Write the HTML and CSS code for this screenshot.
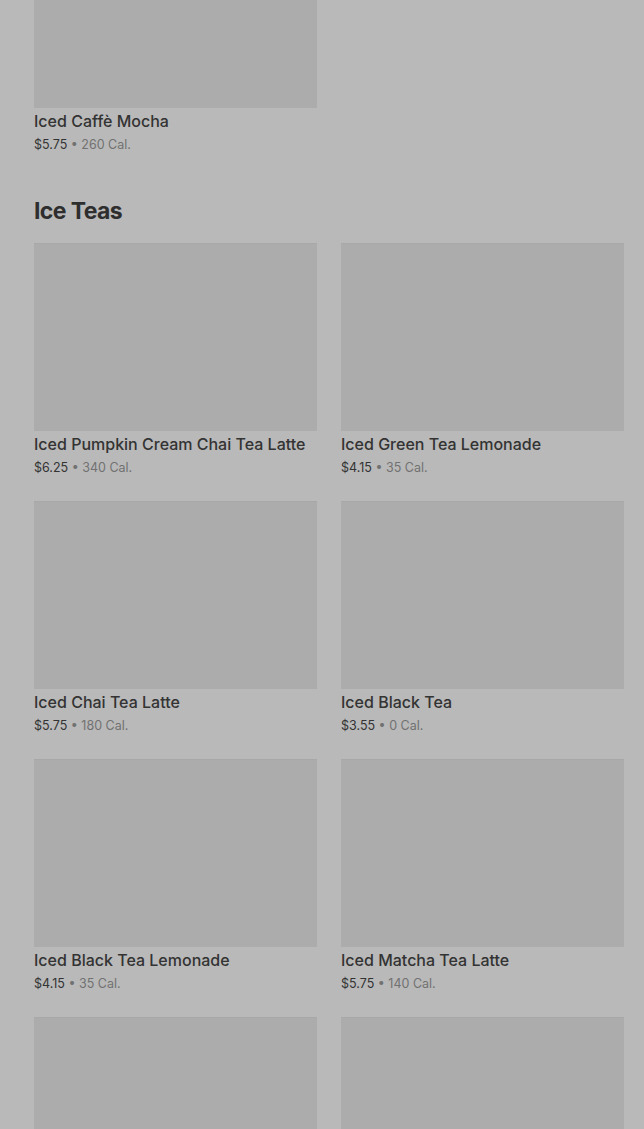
FILE: index.html
```html
<!DOCTYPE html>
<html>
<head>
<meta charset="utf-8">
<meta name="viewport" content="width=device-width, initial-scale=1.0">
<title>Menu</title>
<link rel="stylesheet" href="styles.css">
</head>
<body>
<div class="menu">
    <section class="section">
        <div class="grid">
            <div class="item">
                <div class="thumb"></div>
                <div class="item-name">Iced Caffè Mocha</div>
                <div class="item-meta"><span class="price">$5.75</span> • 260 Cal.</div>
            </div>
        </div>
    </section>

    <section class="section">
        <h2 class="section-title">Ice Teas</h2>
        <div class="grid">
            <div class="item">
                <div class="thumb"></div>
                <div class="item-name">Iced Pumpkin Cream Chai Tea Latte</div>
                <div class="item-meta"><span class="price">$6.25</span> • 340 Cal.</div>
            </div>
            <div class="item">
                <div class="thumb"></div>
                <div class="item-name">Iced Green Tea Lemonade</div>
                <div class="item-meta"><span class="price">$4.15</span> • 35 Cal.</div>
            </div>
            <div class="item">
                <div class="thumb"></div>
                <div class="item-name">Iced Chai Tea Latte</div>
                <div class="item-meta"><span class="price">$5.75</span> • 180 Cal.</div>
            </div>
            <div class="item">
                <div class="thumb"></div>
                <div class="item-name">Iced Black Tea</div>
                <div class="item-meta"><span class="price">$3.55</span> • 0 Cal.</div>
            </div>
            <div class="item">
                <div class="thumb"></div>
                <div class="item-name">Iced Black Tea Lemonade</div>
                <div class="item-meta"><span class="price">$4.15</span> • 35 Cal.</div>
            </div>
            <div class="item">
                <div class="thumb"></div>
                <div class="item-name">Iced Matcha Tea Latte</div>
                <div class="item-meta"><span class="price">$5.75</span> • 140 Cal.</div>
            </div>
            <div class="item">
                <div class="thumb"></div>
            </div>
            <div class="item">
                <div class="thumb"></div>
            </div>
        </div>
    </section>
</div>
</body>
</html>
```
FILE: styles.css
```css
body {
    margin: 0;
    padding: 0;
    background-color: #b9b9b9;
    font-family: Inter, "Noto Sans", sans-serif;
    overflow: hidden;
    height: 1129px;
}
.menu {
    margin-top: -80px; /* page is scrolled */
    padding: 0 20px 0 34px;
}
.section {
    margin-bottom: 40px;
}
.section-title {
    margin: 0 0 16px 0;
    font-size: 23px;
    line-height: 32px;
    font-weight: 700;
    letter-spacing: -0.6px;
    color: #2e2e2e;
}
.grid {
    display: grid;
    grid-template-columns: 1fr 1fr;
    column-gap: 24px;
    row-gap: 23px;
}
.thumb {
    height: 188px;
    background-color: #acacac;
    border-top: 1px solid #a8a8a8;
    box-sizing: border-box;
}
.item-name {
    margin-top: 3px;
    font-size: 16px;
    line-height: 20px;
    font-weight: 500;
    color: #333;
    white-space: nowrap;
}
.item-meta {
    margin-top: 4px;
    font-size: 12.5px;
    line-height: 20px;
    color: #717171;
}
.price {
    color: #333;
}
```
